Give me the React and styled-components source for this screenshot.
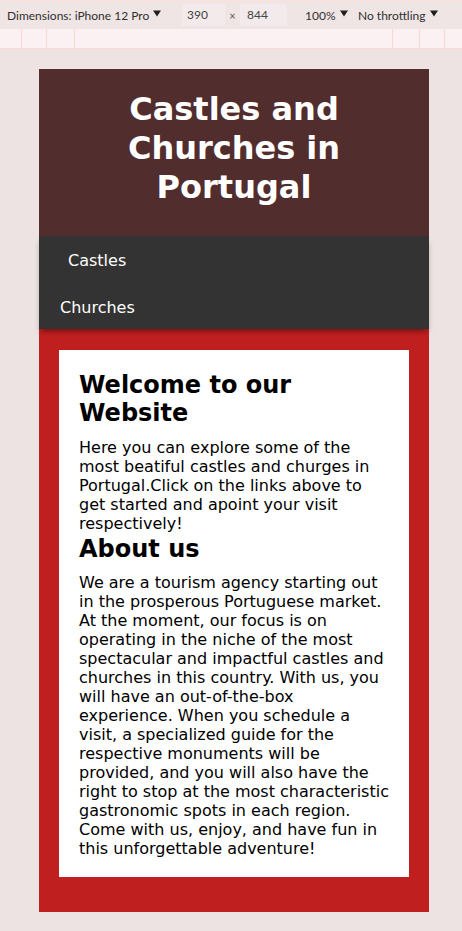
import React from 'react';
import styled, { createGlobalStyle } from 'styled-components';

const GlobalStyle = createGlobalStyle`
  html, body {
    margin: 0;
    padding: 0;
    background: #eee3e3;
  }
  * {
    box-sizing: border-box;
  }
`;

const Page = styled.div`
  width: 462px;
  height: 931px;
  overflow: hidden;
  background: #eee3e3;
`;

const Toolbar = styled.div`
  display: flex;
  align-items: center;
  height: 29px;
  padding-left: 7px;
  background: #f0e5e5;
  border-top: 1px solid #fbe0da;
  font-family: Lato, 'Open Sans', sans-serif;
  font-size: 12px;
  color: #303030;
`;

const ToolItem = styled.span`
  display: flex;
  align-items: center;
  gap: 4px;
  width: ${(p) => (p.$w ? `${p.$w}px` : 'auto')};
  margin-left: ${(p) => p.$gap || 0}px;
  white-space: nowrap;
`;

const SizeBox = styled.span`
  display: inline-block;
  width: ${(p) => p.$w}px;
  height: 22px;
  line-height: 22px;
  padding-left: ${(p) => p.$pad}px;
  background: #f3ebeb;
  color: #444;
`;

const Times = styled.span`
  width: 15px;
  text-align: center;
  font-size: 11px;
  color: #555;
`;

const MediaBar = styled.div`
  display: flex;
  height: 20px;
  background: #fbf0f2;
  border-bottom: 1px solid #fdd8cc;
`;

const MediaCell = styled.div`
  width: ${(p) => p.$w}px;
  flex: ${(p) => (p.$grow ? 1 : 'none')};
  border-right: ${(p) => (p.$last ? 'none' : '1px solid #fdd8cc')};
`;

const Device = styled.div`
  display: flex;
  flex-direction: column;
  width: 390px;
  height: 843px;
  margin: 20px 0 0 39px;
  font-family: 'DejaVu Sans', Verdana, sans-serif;
`;

const Header = styled.header`
  background: #522d2d;
  padding: 21px 20px 29px;
`;

const Title = styled.h1`
  margin: 0;
  font-size: 32px;
  line-height: 39px;
  font-weight: 700;
  text-align: center;
  color: #fff;
`;

const Nav = styled.nav`
  position: relative;
  z-index: 1;
  background: #333333;
  box-shadow: 0 4px 6px -2px rgba(0, 0, 0, 0.45);
`;

const NavLink = styled.a`
  display: block;
  height: 46.5px;
  padding-top: 2px;
  line-height: 46px;
  padding-left: ${(p) => p.$indent}px;
  font-size: 16px;
  color: #fff;
  text-decoration: none;
`;

const Main = styled.main`
  flex: 1;
  background: #c01f1f;
  padding: 21px 20px;
`;

const Card = styled.section`
  background: #fff;
  padding: 21px 20px 19px;
  color: #000;
`;

const Heading = styled.h2`
  margin: ${(p) => (p.$first ? '0 0 11px' : '2px 0 10px')};
  font-size: 24px;
  line-height: 28px;
  font-weight: 700;
`;

const Text = styled.p`
  margin: 0;
  font-size: 16px;
  line-height: 19px;
`;

function Caret() {
  return (
    <svg width="8" height="7" viewBox="0 0 8 7" style={{ marginTop: -3 }}>
      <path d="M0 0.5h8L4 6.5z" fill="#202020" />
    </svg>
  );
}

export default function App() {
  return (
    <Page>
      <GlobalStyle />
      <Toolbar>
        <ToolItem $w={175}>
          Dimensions: iPhone 12 Pro <Caret />
        </ToolItem>
        <SizeBox $w={43} $pad={5}>390</SizeBox>
        <Times>×</Times>
        <SizeBox $w={47} $pad={7}>844</SizeBox>
        <ToolItem $w={53} $gap={18}>
          100% <Caret />
        </ToolItem>
        <ToolItem>
          No throttling <Caret />
        </ToolItem>
      </Toolbar>
      <MediaBar>
        <MediaCell $w={22} />
        <MediaCell $w={25} />
        <MediaCell $w={28} />
        <MediaCell $grow />
        <MediaCell $w={27} />
        <MediaCell $w={25} />
        <MediaCell $w={17} $last />
      </MediaBar>
      <Device>
        <Header>
          <Title>Castles and Churches in Portugal</Title>
        </Header>
        <Nav>
          <NavLink href="#" $indent={29}>Castles</NavLink>
          <NavLink href="#" $indent={21}>Churches</NavLink>
        </Nav>
        <Main>
          <Card>
            <Heading $first>Welcome to our Website</Heading>
            <Text>
              Here you can explore some of the most beatiful castles and churges in
              Portugal.Click on the links above to get started and apoint your visit
              respectively!
            </Text>
            <Heading>About us</Heading>
            <Text>
              We are a tourism agency starting out in the prosperous Portuguese market.
              At the moment, our focus is on operating in the niche of the most
              spectacular and impactful castles and churches in this country. With us,
              you will have an out-of-the-box experience. When you schedule a visit, a
              specialized guide for the respective monuments will be provided, and you
              will also have the right to stop at the most characteristic gastronomic
              spots in each region. Come with us, enjoy, and have fun in this
              unforgettable adventure!
            </Text>
          </Card>
        </Main>
      </Device>
    </Page>
  );
}
